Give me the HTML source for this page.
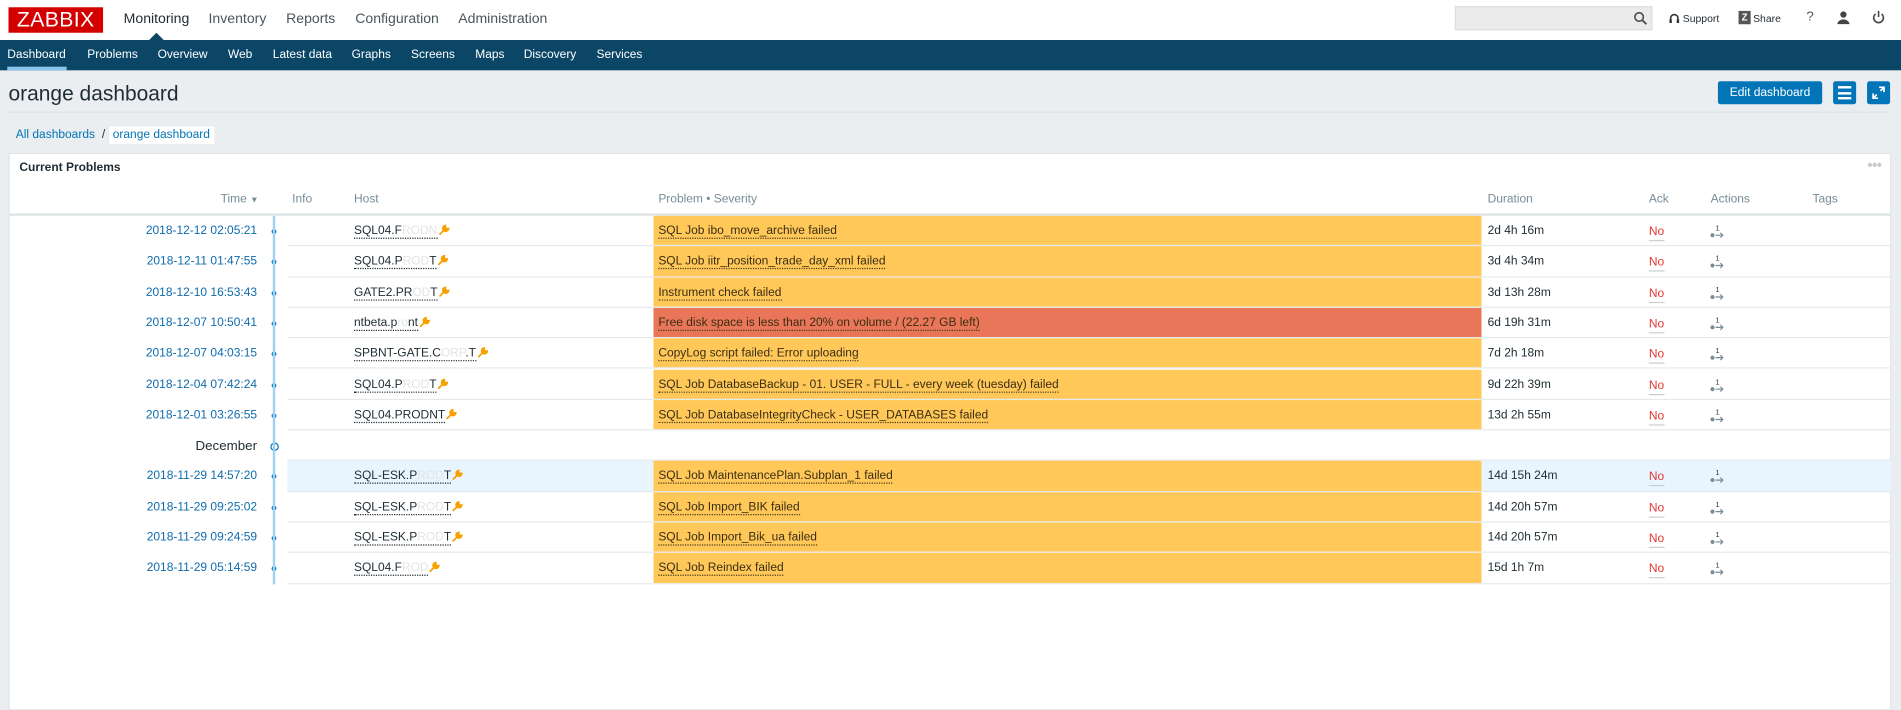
<!DOCTYPE html>
<html><head><meta charset="utf-8"><style>
*{margin:0;padding:0;box-sizing:border-box}
html,body{width:1901px;height:707px;overflow:hidden;background:#ebeef0;font-family:"Liberation Sans",Arial,sans-serif}
#w{position:absolute;left:0;top:0;width:1568px;height:584px;transform:scale(1.21237);transform-origin:0 0;background:#ebeef0;color:#1f2c33}
.abs{position:absolute}
#hdr{left:0;top:0;width:1568px;height:33px;background:#fff}
#logo{left:7px;top:6px;width:78px;height:21px;background:#d40000;color:#fff;font-size:17.5px;line-height:21px;text-align:center;letter-spacing:0.3px}
.tm{top:8px;font-size:11.6px;color:#1f2c33;line-height:16px}
#nav{left:0;top:33px;width:1568px;height:25px;background:#0b4667}
.nv{top:0;font-size:9.9px;line-height:25px;color:#fff}
#tri{left:123px;top:27px;width:0;height:0;border-left:6px solid transparent;border-right:6px solid transparent;border-bottom:6px solid #0b4667}
#srch{left:1200px;top:5px;width:163px;height:20px;background:#ebebeb;border:1px solid #dcdcdc}
.ri{top:9px;font-size:8.6px;color:#1f2c33;line-height:12px}
h1{position:absolute;left:7px;top:66px;font-size:17.3px;font-weight:normal;line-height:22px;color:#1f2c33}
.btn{top:67px;height:19px;background:#0275b8;border-radius:2px;color:#fff}
#sep{left:7px;top:92px;width:1553px;height:1px;background:#dfe4e7}
#bc{top:104px;font-size:9.9px;line-height:15px;color:#0275b8}
#wid{left:7px;top:126px;width:1553px;height:460px;background:#fff;border:1px solid #dfe4e7}
.th{top:158px;font-size:9.9px;color:#768d99;line-height:13px}
#thl{left:7px;top:176px;width:1553px;height:2px;background:#dfe4e7}
#tl{left:225px;top:178px;width:2px;height:304px;background:#9fd1f2}
.r{position:absolute;left:0;width:1568px;height:25.3px;font-size:9.9px;line-height:26px}
.r:after{content:"";position:absolute;left:237px;right:8px;bottom:0;height:1px;background:#e6e9eb}
.t{position:absolute;right:1356px;color:#0e6bad;white-space:nowrap}
.d{position:absolute;left:224px;top:11px;width:4px;height:4px;border-radius:50%;background:#0275b8}
.h{position:absolute;left:292px;white-space:nowrap}
.h b{font-weight:normal;border-bottom:1px dotted #1f2c33}
.h b s{text-decoration:none;color:#e4e4e4}
.h svg{vertical-align:-1px;margin-left:1px}
.p{position:absolute;left:539px;width:683px;top:0;height:24.3px;background:#ffc859;padding-left:4px;white-space:nowrap}
.p.red{background:#e97659}
.p span{border-bottom:1px dotted #4a3a1c;color:#3b2e12}
.du{position:absolute;left:1227px;white-space:nowrap}
.a{position:absolute;left:1360px;color:#e33734;line-height:13px;border-bottom:1px solid #c9cfd3;top:7px}
.ac{position:absolute;left:1410px;top:6px}
.hl{background:#e8f5ff}
</style></head><body><div id="w">
<div id="hdr" class="abs"></div>
<div id="logo" class="abs">ZABBIX</div>
<div class="abs tm" style="left:102px">Monitoring</div>
<div class="abs tm" style="left:172px;color:#4b565c">Inventory</div>
<div class="abs tm" style="left:236px;color:#4b565c">Reports</div>
<div class="abs tm" style="left:293px;color:#4b565c">Configuration</div>
<div class="abs tm" style="left:378px;color:#4b565c">Administration</div>
<div id="srch" class="abs"><svg class="abs" style="left:146px;top:3px" width="12" height="12" viewBox="0 0 12 12"><circle cx="5" cy="5" r="3.5" fill="none" stroke="#555" stroke-width="1.4"/><path d="M7.5 7.5L11 11" stroke="#555" stroke-width="1.6"/></svg></div>
<svg class="abs" style="left:1376px;top:10px" width="10" height="11" viewBox="0 0 10 11"><path d="M2 7V5a3 3 0 0 1 6 0v2" fill="none" stroke="#333" stroke-width="1.3"/><rect x="1" y="6" width="2" height="3" fill="#333"/><rect x="7" y="6" width="2" height="3" fill="#333"/></svg>
<div class="abs ri" style="left:1388px">Support</div>
<div class="abs" style="left:1434px;top:9px;width:10px;height:11px;background:#555;color:#fff;font-size:8px;font-weight:bold;line-height:11px;text-align:center">Z</div>
<div class="abs ri" style="left:1446px">Share</div>
<div class="abs ri" style="left:1490px;font-size:11px;top:8px;color:#555">?</div>
<svg class="abs" style="left:1515px;top:9px" width="11" height="11" viewBox="0 0 11 11"><circle cx="5.5" cy="3" r="2.6" fill="#444"/><path d="M0.5 11a5 4 0 0 1 10 0z" fill="#444"/></svg>
<svg class="abs" style="left:1544px;top:8px" width="11" height="12" viewBox="0 0 11 12"><path d="M3 3.5a4 4 0 1 0 5 0" fill="none" stroke="#444" stroke-width="1.3"/><path d="M5.5 1v5" stroke="#444" stroke-width="1.3"/></svg>
<div id="nav" class="abs">
<div class="abs nv" style="left:6px">Dashboard</div>
<div class="abs" style="left:6px;top:22px;width:49px;height:3px;background:#89c4ec"></div>
<div class="abs nv" style="left:72px">Problems</div>
<div class="abs nv" style="left:130px">Overview</div>
<div class="abs nv" style="left:188px">Web</div>
<div class="abs nv" style="left:225px">Latest data</div>
<div class="abs nv" style="left:290px">Graphs</div>
<div class="abs nv" style="left:339px">Screens</div>
<div class="abs nv" style="left:392px">Maps</div>
<div class="abs nv" style="left:432px">Discovery</div>
<div class="abs nv" style="left:492px">Services</div>
</div>
<div id="tri" class="abs"></div>
<h1>orange dashboard</h1>
<div class="abs btn" style="left:1417px;width:86px;font-size:9.9px;line-height:19px;text-align:center">Edit dashboard</div>
<div class="abs btn" style="left:1512px;width:19px"><div class="abs" style="left:4px;top:4px;width:11px;height:2px;background:#fff"></div><div class="abs" style="left:4px;top:8.5px;width:11px;height:2px;background:#fff"></div><div class="abs" style="left:4px;top:13px;width:11px;height:2px;background:#fff"></div></div>
<div class="abs btn" style="left:1540px;width:19px"><svg class="abs" style="left:4px;top:4px" width="11" height="11" viewBox="0 0 11 11"><path d="M6 1h4v4M10 1L7 4M5 10H1V6M1 10l3-3" fill="none" stroke="#fff" stroke-width="1.4"/></svg></div>
<div id="sep" class="abs"></div>
<div id="bc" class="abs" style="left:13px">All dashboards</div>
<div id="bc" class="abs" style="left:84px;color:#1f2c33">/</div>
<div class="abs" style="left:89px;top:103px;width:89px;height:17px;background:#fff;border:1px solid #e6e9eb"></div>
<div id="bc" class="abs" style="left:93px">orange dashboard</div>
<div id="wid" class="abs"></div>
<div class="abs" style="left:16px;top:132px;font-size:9.9px;font-weight:bold;line-height:14px">Current Problems</div>
<div class="abs" style="left:1540px;top:131px;font-size:8px;color:#c5cbcf;letter-spacing:-1px">●●●</div>
<div class="abs th" style="left:182px">Time <span style="font-size:7px">▼</span></div>
<div class="abs th" style="left:241px">Info</div>
<div class="abs th" style="left:292px">Host</div>
<div class="abs th" style="left:543px">Problem • Severity</div>
<div class="abs th" style="left:1227px">Duration</div>
<div class="abs th" style="left:1360px">Ack</div>
<div class="abs th" style="left:1411px">Actions</div>
<div class="abs th" style="left:1495px">Tags</div>
<div id="thl" class="abs"></div>

<svg width="0" height="0" style="position:absolute"><defs>
<symbol id="wr" viewBox="0 0 10 10"><path d="M1 9L5.5 4.5M6 1.2a2.6 2.6 0 1 0 2.8 2.8L7.3 4.2 5.8 2.7z" fill="#f8a000" stroke="#f8a000" stroke-width="1.6" stroke-linecap="round"/></symbol>
<symbol id="acs" viewBox="0 0 14 14"><text x="5" y="6" font-size="6" fill="#333" font-family="Liberation Sans">1</text><circle cx="2.5" cy="10" r="1.7" fill="#768d99"/><path d="M5 10h6M9 8l2 2-2 2" fill="none" stroke="#768d99" stroke-width="1"/></symbol>
</defs></svg>

<div class="r" style="top:178px"><span class="t">2018-12-12 02:05:21</span><i class="d"></i><span class="h"><b>SQL04.F<s>RODN</s></b><svg width="9" height="9"><use href="#wr"/></svg></span><div class="p"><span>SQL Job ibo_move_archive failed</span></div><span class="du">2d 4h 16m</span><span class="a">No</span><svg class="ac" width="14" height="14"><use href="#acs"/></svg></div>
<div class="r" style="top:203.3px"><span class="t">2018-12-11 01:47:55</span><i class="d"></i><span class="h"><b>SQL04.P<s>ROD</s>T</b><svg width="9" height="9"><use href="#wr"/></svg></span><div class="p"><span>SQL Job iitr_position_trade_day_xml failed</span></div><span class="du">3d 4h 34m</span><span class="a">No</span><svg class="ac" width="14" height="14"><use href="#acs"/></svg></div>
<div class="r" style="top:228.6px"><span class="t">2018-12-10 16:53:43</span><i class="d"></i><span class="h"><b>GATE2.PR<s>OD</s>T</b><svg width="9" height="9"><use href="#wr"/></svg></span><div class="p"><span>Instrument check failed</span></div><span class="du">3d 13h 28m</span><span class="a">No</span><svg class="ac" width="14" height="14"><use href="#acs"/></svg></div>
<div class="r" style="top:253.9px"><span class="t">2018-12-07 10:50:41</span><i class="d"></i><span class="h"><b>ntbeta.p<s>ro</s>nt</b><svg width="9" height="9"><use href="#wr"/></svg></span><div class="p red"><span>Free disk space is less than 20% on volume / (22.27 GB left)</span></div><span class="du">6d 19h 31m</span><span class="a">No</span><svg class="ac" width="14" height="14"><use href="#acs"/></svg></div>
<div class="r" style="top:279.2px"><span class="t">2018-12-07 04:03:15</span><i class="d"></i><span class="h"><b>SPBNT-GATE.C<s>ORP</s>.T</b><svg width="9" height="9"><use href="#wr"/></svg></span><div class="p"><span>CopyLog script failed: Error uploading</span></div><span class="du">7d 2h 18m</span><span class="a">No</span><svg class="ac" width="14" height="14"><use href="#acs"/></svg></div>
<div class="r" style="top:304.5px"><span class="t">2018-12-04 07:42:24</span><i class="d"></i><span class="h"><b>SQL04.P<s>ROD</s>T</b><svg width="9" height="9"><use href="#wr"/></svg></span><div class="p"><span>SQL Job DatabaseBackup - 01. USER - FULL - every week (tuesday) failed</span></div><span class="du">9d 22h 39m</span><span class="a">No</span><svg class="ac" width="14" height="14"><use href="#acs"/></svg></div>
<div class="r" style="top:329.8px"><span class="t">2018-12-01 03:26:55</span><i class="d"></i><span class="h"><b>SQL04.PRODNT</b><svg width="9" height="9"><use href="#wr"/></svg></span><div class="p"><span>SQL Job DatabaseIntegrityCheck - USER_DATABASES failed</span></div><span class="du">13d 2h 55m</span><span class="a">No</span><svg class="ac" width="14" height="14"><use href="#acs"/></svg></div>
<div class="r" style="top:355.1px"><span class="t" style="color:#1f2c33;font-size:11px">December</span><i class="d" style="left:222.5px;top:9.5px;width:7px;height:7px;background:#fff;border:1.5px solid #0275b8"></i></div>
<div class="r" style="top:380.4px"><div class="hl" style="position:absolute;left:237px;width:1323px;height:24.3px"></div><span class="t">2018-11-29 14:57:20</span><i class="d"></i><span class="h"><b>SQL-ESK.P<s>ROD</s>T</b><svg width="9" height="9"><use href="#wr"/></svg></span><div class="p"><span>SQL Job MaintenancePlan.Subplan_1 failed</span></div><span class="du">14d 15h 24m</span><span class="a">No</span><svg class="ac" width="14" height="14"><use href="#acs"/></svg></div>
<div class="r" style="top:405.7px"><span class="t">2018-11-29 09:25:02</span><i class="d"></i><span class="h"><b>SQL-ESK.P<s>ROD</s>T</b><svg width="9" height="9"><use href="#wr"/></svg></span><div class="p"><span>SQL Job Import_BIK failed</span></div><span class="du">14d 20h 57m</span><span class="a">No</span><svg class="ac" width="14" height="14"><use href="#acs"/></svg></div>
<div class="r" style="top:431px"><span class="t">2018-11-29 09:24:59</span><i class="d"></i><span class="h"><b>SQL-ESK.P<s>ROD</s>T</b><svg width="9" height="9"><use href="#wr"/></svg></span><div class="p"><span>SQL Job Import_Bik_ua failed</span></div><span class="du">14d 20h 57m</span><span class="a">No</span><svg class="ac" width="14" height="14"><use href="#acs"/></svg></div>
<div class="r" style="top:456.3px"><span class="t">2018-11-29 05:14:59</span><i class="d"></i><span class="h"><b>SQL04.F<s>ROD</s></b><svg width="9" height="9"><use href="#wr"/></svg></span><div class="p"><span>SQL Job Reindex failed</span></div><span class="du">15d 1h 7m</span><span class="a">No</span><svg class="ac" width="14" height="14"><use href="#acs"/></svg></div>
<div id="tl" class="abs"></div>
</div></body></html>
